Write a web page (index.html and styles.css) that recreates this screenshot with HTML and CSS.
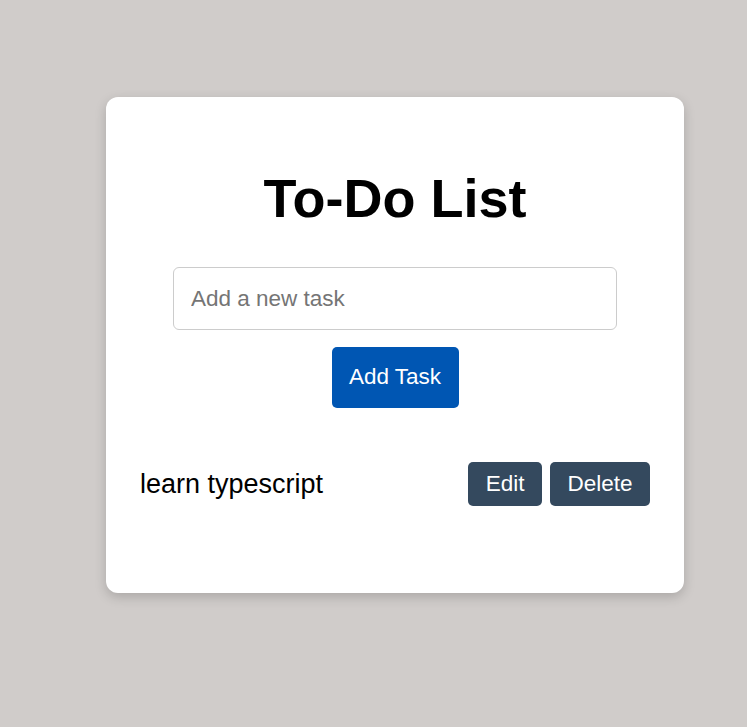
FILE: index.html
```html
<!DOCTYPE html>
<html lang="en">
<head>
<meta charset="utf-8">
<title>To-Do List</title>
<link rel="stylesheet" href="styles.css">
</head>
<body>
  <main class="card">
    <h1 class="title">To-Do List</h1>
    <form class="add-form" onsubmit="return false;">
      <input class="task-input" type="text" placeholder="Add a new task">
      <button class="btn btn-primary" type="submit">Add Task</button>
    </form>
    <ul class="task-list">
      <li class="task">
        <span class="task-text">learn typescript</span>
        <div class="task-actions">
          <button class="btn btn-dark" type="button">Edit</button>
          <button class="btn btn-dark" type="button">Delete</button>
        </div>
      </li>
    </ul>
  </main>
</body>
</html>
```
FILE: styles.css
```css
html, body {
  margin: 0;
  padding: 0;
}
body {
  background: #d0ccca;
  font-family: "Liberation Sans", Arial, sans-serif;
  min-height: 727px;
  padding: 97px 0 0 106px;
  box-sizing: border-box;
}
.card {
  width: 578px;
  box-sizing: border-box;
  background: #ffffff;
  border-radius: 12px;
  padding: 34px;
  box-shadow: 0 4px 12px rgba(0, 0, 0, 0.18);
}
.title {
  font-size: 54px;
  font-weight: bold;
  text-align: center;
  margin: 36px 0 38px;
  line-height: 62px;
  color: #000;
}
.add-form {
  display: flex;
  flex-direction: column;
  align-items: center;
  gap: 17px;
}
.task-input {
  width: 444px;
  box-sizing: border-box;
  height: 63px;
  padding: 0 17px;
  font-family: inherit;
  font-size: 22.5px;
  border: 1px solid #cccccc;
  border-radius: 6px;
  color: #000;
  outline: none;
}
.task-input::placeholder {
  color: #757575;
}
.btn {
  font-family: inherit;
  font-size: 22.5px;
  line-height: 26px;
  color: #ffffff;
  border: none;
  border-radius: 5px;
  cursor: pointer;
}
.btn-primary {
  background: #0056b3;
  width: 127px;
  padding: 17px 0 18px;
}
.btn-dark {
  background: #34495e;
  padding: 9px 17.5px;
}
.task-list {
  list-style: none;
  margin: 44px 0 43px;
  padding: 0;
}
.task {
  display: flex;
  align-items: center;
  justify-content: space-between;
  padding: 10px 0;
}
.task-text {
  font-size: 27px;
  color: #000;
}
.task-actions {
  display: flex;
  gap: 8px;
}
```
